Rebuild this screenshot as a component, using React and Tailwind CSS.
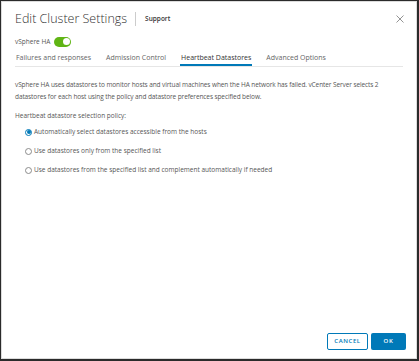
import React, { useState } from 'react';

const tabs = ['Failures and responses', 'Admission Control', 'Heartbeat Datastores', 'Advanced Options'];

const options = [
  'Automatically select datastores accessible from the hosts',
  'Use datastores only from the specified list',
  'Use datastores from the specified list and complement automatically if needed',
];

export default function App() {
  const [policy, setPolicy] = useState(0);
  const [haOn, setHaOn] = useState(true);

  return (
    <div className="w-[419px] h-[361px] bg-[#2b2b2b] pt-px pl-px pr-[2px] pb-[2px]" style={{ fontFamily: '"Open Sans", "Liberation Sans", sans-serif' }}>
      <div className="w-full h-full bg-white border border-[#dcdcdc] flex flex-col text-[#565656]">
        {/* Header */}
        <div className="flex items-center pl-[13px] pr-[12px] pt-[4px] h-[30px]">
          <h2 className="text-[12.5px] font-light text-[#333]">Edit Cluster Settings</h2>
          <div className="w-px h-[14px] bg-[#ccc] ml-[8px] mr-[9px]"></div>
          <span className="text-[6.5px] font-semibold text-[#333]">Support</span>
          <svg className="ml-auto shrink-0" width="8" height="8" viewBox="0 0 8 8">
            <path d="M0.5 0.5 L7.5 7.5 M7.5 0.5 L0.5 7.5" stroke="#888" strokeWidth="0.9" fill="none" />
          </svg>
        </div>

        {/* vSphere HA toggle */}
        <div className="flex items-center gap-[4px] pl-[13px] mt-[4px] h-[11px]">
          <span className="text-[6.5px]">vSphere HA</span>
          <button
            type="button"
            onClick={() => setHaOn(!haOn)}
            className={`w-[17px] h-[10px] rounded-full flex items-center px-[1.5px] ${haOn ? 'bg-[#60b515] justify-end' : 'bg-[#999] justify-start'}`}
          >
            <span className="w-[7px] h-[7px] rounded-full bg-white"></span>
          </button>
        </div>

        {/* Tabs */}
        <div className="flex mx-[13px] mt-[4px] border-b border-[#e6e6e6] gap-[13px] h-[16px]">
          {tabs.map((t, i) => (
            <div
              key={t}
              className={`text-[7px] px-[1px] pt-[2px] ${i === 2 ? 'text-[#333] border-b-2 border-[#0079b8]' : 'text-[#666]'}`}
            >
              {t}
            </div>
          ))}
        </div>

        {/* Content */}
        <div className="px-[13px] pt-[12px] text-[6.5px] leading-[12px] text-[#565656]">
          <p className="tracking-[-0.1px]">
            vSphere HA uses datastores to monitor hosts and virtual machines when the HA network has failed. vCenter Server selects 2 datastores for each host using the policy and datastore preferences specified below.
          </p>
          <p className="mt-[7px]">Heartbeat datastore selection policy:</p>
          <div className="flex flex-col gap-[7px] mt-[4px] pl-[10px]">
            {options.map((o, i) => (
              <label key={o} className="flex items-center gap-[2px] cursor-pointer" onClick={() => setPolicy(i)}>
                <span className={`w-[7px] h-[7px] rounded-full border flex items-center justify-center ${policy === i ? 'border-[#0079b8]' : 'border-[#8c8c8c]'}`}>
                  {policy === i && <span className="w-[4px] h-[4px] rounded-full bg-[#0079b8]"></span>}
                </span>
                <span>{o}</span>
              </label>
            ))}
          </div>
        </div>

        {/* Footer */}
        <div className="mt-auto flex justify-end gap-[3px] pr-[10px] pb-[8px]">
          <button className="w-[41px] h-[17px] border border-[#0079b8] rounded-[2px] text-[#0079b8] text-[6px] font-semibold tracking-[0.6px]">
            CANCEL
          </button>
          <button className="w-[35px] h-[17px] bg-[#0079b8] rounded-[2px] text-white text-[6px] font-semibold tracking-[0.6px]">
            OK
          </button>
        </div>
      </div>
    </div>
  );
}
